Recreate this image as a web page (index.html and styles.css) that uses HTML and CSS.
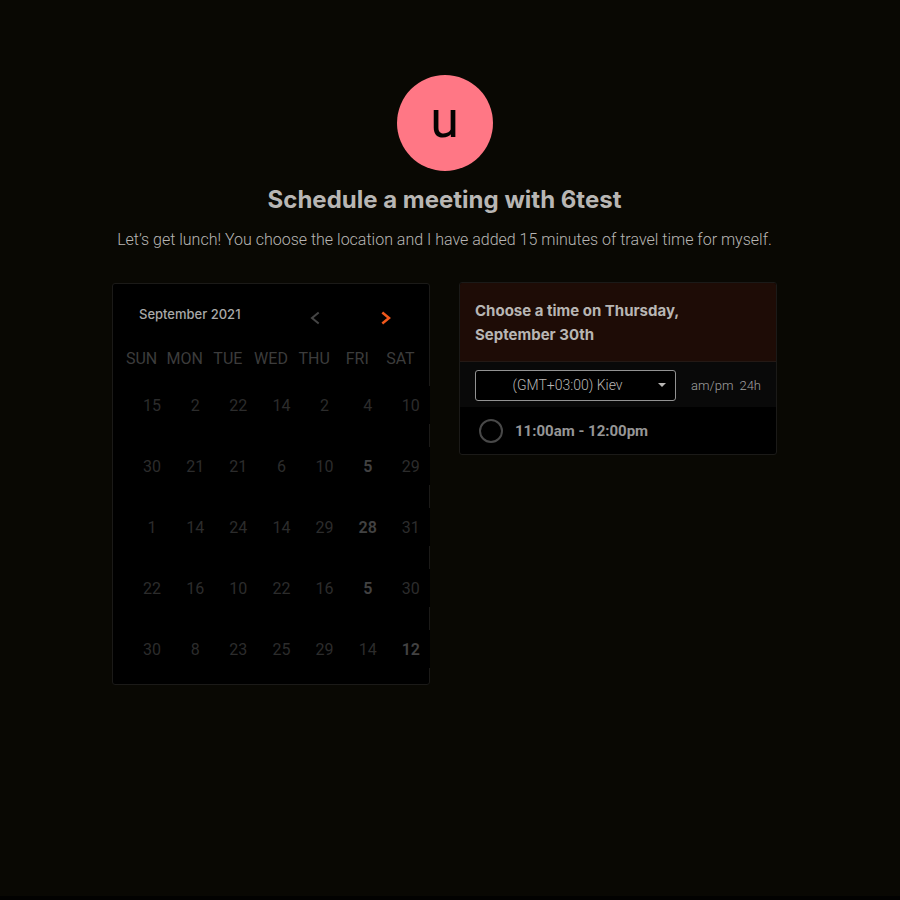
FILE: index.html
```html
<!DOCTYPE html>
<html lang="en">
<head>
<meta charset="utf-8">
<meta name="viewport" content="width=device-width, initial-scale=1">
<title>Schedule a meeting with 6test</title>
<link rel="stylesheet" href="styles.css">
</head>
<body>
<main class="page">
  <header class="intro">
    <div class="avatar">u</div>
    <h1 class="title">Schedule a meeting with 6test</h1>
    <p class="note">Let’s get lunch! You choose the location and I have added 15 minutes of travel time for myself.</p>
  </header>
  <div class="columns">
    <section class="calendar">
      <div class="month-bar">
        <h2 class="month">September 2021</h2>
        <button class="step" type="button" aria-label="Previous month"><svg width="10" height="14" viewBox="0 0 10 14"><path d="M8.7 1.5 2 7l6.700 5.500"/></svg></button>
        <button class="step step-next" type="button" aria-label="Next month"><svg width="10" height="14" viewBox="0 0 10 14"><path d="M1.300 1.500 8 7l-6.700 5.500"/></svg></button>
      </div>
      <table class="days">
        <thead>
          <tr><th>SUN</th><th>MON</th><th>TUE</th><th>WED</th><th>THU</th><th>FRI</th><th>SAT</th></tr>
        </thead>
        <tbody>
          <tr><td><button class="day">15</button></td><td><button class="day">2</button></td><td><button class="day">22</button></td><td><button class="day">14</button></td><td><button class="day">2</button></td><td><button class="day">4</button></td><td><button class="day">10</button></td></tr>
          <tr><td><button class="day">30</button></td><td><button class="day">21</button></td><td><button class="day">21</button></td><td><button class="day">6</button></td><td><button class="day">10</button></td><td><button class="day open">5</button></td><td><button class="day">29</button></td></tr>
          <tr><td><button class="day">1</button></td><td><button class="day">14</button></td><td><button class="day">24</button></td><td><button class="day">14</button></td><td><button class="day">29</button></td><td><button class="day open">28</button></td><td><button class="day">31</button></td></tr>
          <tr><td><button class="day">22</button></td><td><button class="day">16</button></td><td><button class="day">10</button></td><td><button class="day">22</button></td><td><button class="day">16</button></td><td><button class="day open">5</button></td><td><button class="day">30</button></td></tr>
          <tr><td><button class="day">30</button></td><td><button class="day">8</button></td><td><button class="day">23</button></td><td><button class="day">25</button></td><td><button class="day">29</button></td><td><button class="day">14</button></td><td><button class="day open">12</button></td></tr>
        </tbody>
      </table>
    </section>
    <section class="times">
      <h2 class="times-title">Choose a time on Thursday, September 30th</h2>
      <div class="zone-bar">
        <div class="zone">
          <select class="zone-select" aria-label="Time zone"><option>(GMT+03:00) Kiev</option></select>
          <svg class="caret" width="8" height="4" viewBox="0 0 8 4"><path d="M0 0h8L4 4z"/></svg>
        </div>
        <div class="formats">
          <button class="format" type="button">am/pm</button>
          <button class="format" type="button">24h</button>
        </div>
      </div>
      <label class="slot"><input class="slot-radio" type="radio" name="slot">11:00am - 12:00pm</label>
    </section>
  </div>
</main>
</body>
</html>
```
FILE: styles.css
```css
* {
  box-sizing: border-box;
}

body {
  margin: 0;
  min-height: 100vh;
  background: #090803;
  border-bottom: 4px solid #020201;
  color: #b8b6b4;
  font-family: Roboto, "Liberation Sans", sans-serif;
  font-size: 16px;
}

button,
select {
  margin: 0;
  padding: 0;
  border: 0;
  background: none;
  color: inherit;
  font: inherit;
}

.page {
  max-width: 889px;
  margin-right: 11px;
  padding: 75px 112px 40px;
}

.intro {
  display: flex;
  flex-direction: column;
  align-items: center;
  text-align: center;
}

.avatar {
  width: 96px;
  height: 96px;
  border-radius: 50%;
  background: #ff7785;
  color: #050302;
  font-size: 52px;
  line-height: 90px;
}

.title {
  margin: 13px 0 0;
  font-family: Inter, sans-serif;
  font-size: 24px;
  font-weight: 700;
  line-height: 32px;
}

.note {
  margin: 11px 0 0;
  font-weight: 300;
  line-height: 26px;
  white-space: nowrap;
}

.columns {
  display: grid;
  grid-template-columns: 1fr 1fr;
  gap: 29px;
  align-items: start;
  margin-top: 29px;
}

.calendar {
  margin-top: 1px;
  padding: 0 7px 16px;
  border: 1px solid #1b1a18;
  border-radius: 3px;
  background: #000;
}

.month-bar {
  display: flex;
  align-items: center;
  padding: 18px 24px 0 19px;
}

.month {
  flex: 1;
  margin: 0;
  padding-bottom: 8px;
  color: #a9a9a9;
  font-family: Inter, sans-serif;
  font-size: 13px;
  font-weight: 500;
  line-height: 24px;
}

.step {
  width: 24px;
  height: 28px;
  margin-left: 47px;
}

.step svg {
  display: block;
  margin: 0 auto;
  fill: none;
  stroke: #454545;
  stroke-width: 2;
}

.step-next svg {
  stroke: #f0581c;
  stroke-width: 2.5;
}

.days {
  width: 100%;
  table-layout: fixed;
  border-collapse: collapse;
}

.days th {
  height: 52px;
  padding: 0 0 4px;
  color: #3c3c3c;
  font-weight: 400;
  text-align: center;
}

.days td {
  height: 61px;
  padding: 0 0 0 13px;
  vertical-align: top;
}

.day {
  display: block;
  width: 38px;
  height: 38px;
  background: #000;
  color: #2c2c2c;
  text-align: center;
}

.days tr:last-child td {
  height: 38px;
}

.days .open {
  color: #424242;
  font-weight: 600;
}

.times {
  overflow: hidden;
  border: 1px solid #1b1a18;
  border-radius: 3px;
  background: #000;
}

.times-title {
  margin: 0;
  padding: 16px 60px 14px 15px;
  border-bottom: 1px solid #241915;
  background: #1e0c06;
  font-family: Inter, sans-serif;
  font-size: 15px;
  font-weight: 700;
  line-height: 24px;
}

.zone-bar {
  display: flex;
  align-items: center;
  gap: 15px;
  padding: 8px 15px 6px;
  background: #090909;
  font-size: 13px;
  font-weight: 300;
}

.zone {
  position: relative;
  flex: 1;
}

.zone-select {
  display: block;
  width: 100%;
  height: 31px;
  padding: 0 32px 2px 16px;
  border: 1px solid #929292;
  border-radius: 3px;
  appearance: none;
  background: #000;
  font-size: 14px;
  text-align: center;
  text-align-last: center;
}

.caret {
  position: absolute;
  top: 13px;
  right: 10px;
  fill: #b8b6b4;
  pointer-events: none;
}

.formats {
  display: flex;
  gap: 6px;
  color: #a0a0a0;
}

.slot {
  display: flex;
  align-items: center;
  gap: 12px;
  height: 47px;
  padding-left: 19px;
  color: #969696;
  font-size: 15px;
  font-weight: 700;
}

.slot-radio {
  width: 24px;
  height: 24px;
  margin: 0;
  border: 2px solid #484848;
  border-radius: 50%;
  appearance: none;
}

.slot-radio:checked {
  border-width: 7px;
}
```
